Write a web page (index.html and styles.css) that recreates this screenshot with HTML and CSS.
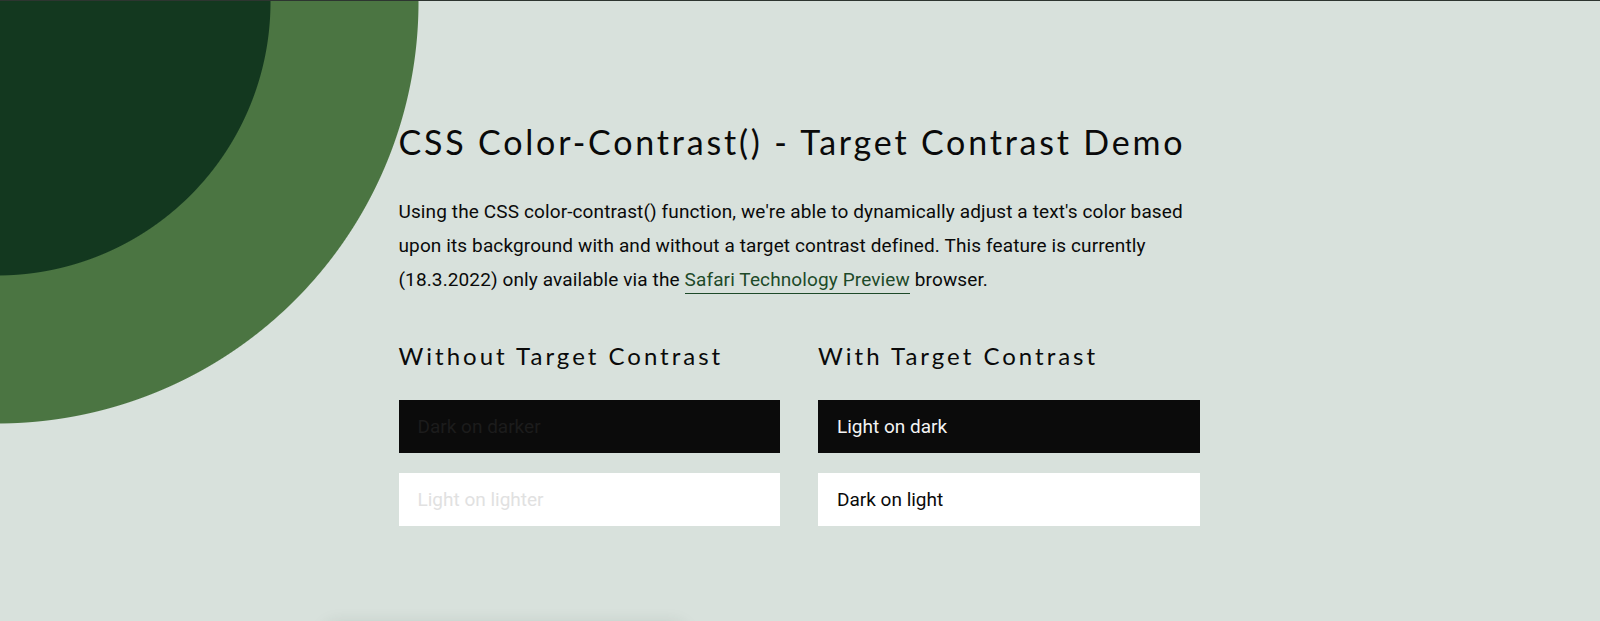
FILE: index.html
```html
<!DOCTYPE html>
<html lang="en">
  <head>
    <meta charset="UTF-8" />
    <meta name="viewport" content="width=device-width, initial-scale=1.0" />
    <title>CSS Color-Contrast() - Target Contrast Demo</title>
    <link rel="stylesheet" href="styles.css">
  </head>
  <body>
    <main class="wrapper">
      <h1>CSS Color-Contrast() - Target Contrast Demo</h1>
      <p class="intro">
        Using the CSS color-contrast() function, we're able to dynamically adjust a text's color based
        upon its background with and without a target contrast defined. This feature is currently
        (18.3.2022) only available via the
        <a href="#">Safari Technology Preview</a> browser.
      </p>

      <div class="columns">
        <section class="column">
          <h2>Without Target Contrast</h2>
          <div class="swatch dark">
            <span class="dim-dark">Dark on darker</span>
          </div>
          <div class="swatch light">
            <span class="dim-light">Light on lighter</span>
          </div>
        </section>

        <section class="column">
          <h2>With Target Contrast</h2>
          <div class="swatch dark">
            <span class="on-dark">Light on dark</span>
          </div>
          <div class="swatch light">
            <span class="on-light">Dark on light</span>
          </div>
        </section>
      </div>

      <div class="card"></div>
    </main>
  </body>
</html>
```

FILE: styles.css
```css
html,
body {
  height: 100%;
}
body {
  margin: 0;
  border-top: 1px solid #2d3530;
  font-family: "Roboto", "Liberation Sans", sans-serif;
  color: #0a0a0a;
  background-color: #d8e1dc;
  /* two rings in the top left corner */
  background-image: radial-gradient(
    circle at -3px 2px,
    #13381f 0,
    #13381f 273px,
    #4b7542 274px,
    #4b7542 421px,
    transparent 422px
  );
  background-repeat: no-repeat;
  overflow: hidden;
}

.wrapper {
  width: 801px;
  margin: 0 auto;
  padding: 121px 2px 0 0;
}

h1 {
  font-family: "Lato", "Open Sans", sans-serif;
  font-weight: 400;
  font-size: 34px;
  letter-spacing: 2.8px;
  margin: 0 0 32px;
  line-height: 1.2;
}

.intro {
  font-size: 19px;
  line-height: 34px;
  letter-spacing: 0.12px;
  margin: 0 0 45px;
}
.intro a {
  color: #1d4a29;
  text-decoration: none;
  border-bottom: 1px solid #1d4a29;
  padding-bottom: 2px;
}

.columns {
  display: grid;
  grid-template-columns: 1fr 1fr;
  gap: 38px;
}

h2 {
  font-family: "Lato", "Open Sans", sans-serif;
  font-weight: 400;
  font-size: 24px;
  letter-spacing: 3px;
  margin: 0 0 29px;
  line-height: 1.2;
}

.swatch {
  height: 53px;
  display: flex;
  align-items: center;
  padding: 0 19px;
  font-size: 19px;
  margin-bottom: 20px;
}
.dark {
  background-color: #0b0b0b;
}
.light {
  background-color: #ffffff;
}
.dim-dark {
  color: #1c1c1c;
}
.dim-light {
  color: #e1e1e1;
}
.on-dark {
  color: #f4f4f4;
}
.on-light {
  color: #0a0a0a;
}

.card {
  width: 356px;
  height: 60px;
  margin: 82px 0 0 -72px;
  border-radius: 8px;
  background-color: #d8e1dc;
  box-shadow: 0 -2px 18px rgba(40, 60, 50, 0.18);
}
```
